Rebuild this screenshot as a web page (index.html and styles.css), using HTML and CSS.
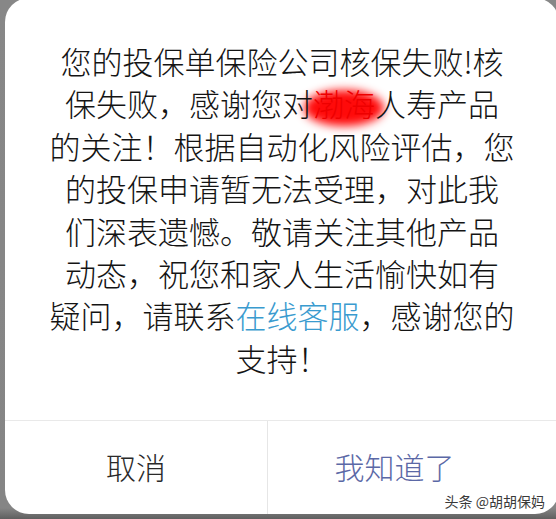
FILE: index.html
```html
<!DOCTYPE html>
<html lang="zh-CN">
<head>
    <meta charset="UTF-8">
    <meta name="viewport" content="width=device-width, initial-scale=1.0">
    <title>核保结果</title>
    <link rel="stylesheet" href="styles.css">
</head>
<body>
<div class="dialog">
    <p class="message">
        您的投保单保险公司核保失败!核<br>
        保失败，感谢您对<span class="masked">渤海</span>人寿产品<br>
        的关注！根据自动化风险评估，您<br>
        的投保申请暂无法受理，对此我<br>
        们深表遗憾。敬请关注其他产品<br>
        动态，祝您和家人生活愉快如有<br>
        疑问，请联系<a class="link" href="#">在线客服</a>，感谢您的<br>
        支持！
    </p>
    <div class="actions">
        <button class="action cancel">取消</button>
        <button class="action confirm">我知道了</button>
    </div>
    <span class="watermark">头条 @胡胡保妈</span>
</div>
</body>
</html>
```

FILE: styles.css
```css
body {
    margin: 0;
    height: 519px;
    overflow: hidden;
    font-family: "Noto Sans CJK SC", "Noto Sans", sans-serif;
    background: linear-gradient(to bottom, #878787 0, #858585 508px, #5f5f5f 519px);
}

.dialog {
    position: relative;
    isolation: isolate;
    display: flex;
    flex-direction: column;
    margin: -2px 0 0 5px;
    width: 554px;
    height: 516px;
    background-color: #fff;
    border-radius: 24px;
}

.message {
    flex: 1;
    margin: 0;
    padding: 42px 20px 0;
    font-size: 31px;
    font-weight: 300;
    line-height: 42.4px;
    text-align: center;
    color: #141414;
}

/* red smudge over the company name */
.masked {
    position: relative;
    color: #ee0000;
}

.masked::before {
    content: "";
    position: absolute;
    left: -9px;
    right: -9px;
    top: 10px;
    bottom: -1px;
    background-color: #ff0a0a;
    border-radius: 50%;
    filter: blur(5px);
    z-index: -1;
}

.link {
    color: #3a9bcf;
    text-decoration: none;
}

.actions {
    display: grid;
    grid-template-columns: 262px 1fr;
    height: 93px;
    border-top: 1px solid #e9e9e9;
}

.action {
    border: none;
    background: none;
    font-family: inherit;
    font-size: 30px;
    font-weight: 300;
    padding: 0 0 4px;
    cursor: pointer;
}

.cancel {
    color: #2a2a2a;
}

.confirm {
    padding-right: 38px;
    border-left: 1px solid #e6e6e6;
    color: #5b68a6;
}

.watermark {
    position: absolute;
    right: 14px;
    bottom: 3px;
    font-size: 14px;
    color: #3a3a3a;
    text-shadow: 0 0 2px #fff;
}
```
